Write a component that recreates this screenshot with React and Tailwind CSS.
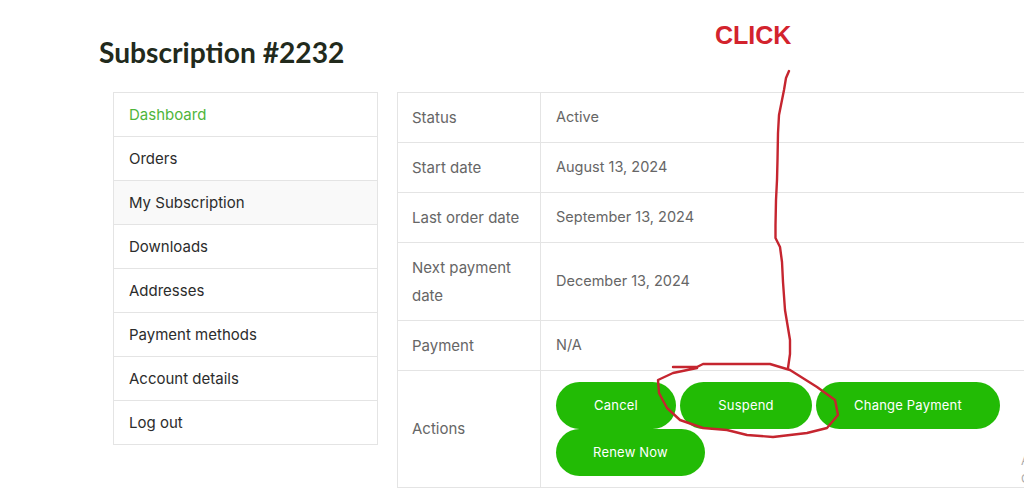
import React from 'react';

const menuItems = ['Dashboard', 'Orders', 'My Subscription', 'Downloads', 'Addresses', 'Payment methods', 'Account details', 'Log out'];

const rows = [
  { label: 'Status', value: 'Active', rowClass: 'h-[50px]' },
  { label: 'Start date', value: 'August 13, 2024', rowClass: 'h-[50px]' },
  { label: 'Last order date', value: 'September 13, 2024', rowClass: 'h-[50px]' },
  { label: 'Next payment date', value: 'December 13, 2024', rowClass: 'h-[78px]' },
  { label: 'Payment', value: 'N/A', rowClass: 'h-[50px]' },
];

const ActionButton = ({ label, width }) => (
  <button className={`${width} h-[47px] rounded-full bg-[#22bb05] text-white text-[13px] tracking-[0.2px]`}>{label}</button>
);

const App = () => {
  return (
    <div className="relative w-[1024px] h-[498px] overflow-hidden bg-white font-['Inter',sans-serif]">
      <h1 className="pl-[99px] pt-[34px] h-[92px] text-[28.2px] leading-[36px] font-bold text-[#222a1c] font-['Lato',sans-serif]">Subscription #2232</h1>

      <div className="flex items-start pl-[113px] gap-[19px]">
        <nav className="w-[265px] shrink-0 border border-[#e4e4e4] border-b-0">
          {menuItems.map((item, i) => (
            <div
              key={item}
              className={`h-[44px] flex items-center pl-[15px] pt-[1px] border-b border-[#e4e4e4] text-[15px] ${i === 0 ? 'text-[#4fb53c]' : 'text-[#2c2c2c]'} ${i === 2 ? 'bg-[#f9f9f9]' : ''}`}
            >
              {item}
            </div>
          ))}
        </nav>

        <div className="w-[700px] shrink-0 border border-[#e4e4e4] border-b-0 text-[15px] text-[#666666]">
          {rows.map((row) => (
            <div key={row.label} className={`${row.rowClass} flex border-b border-[#e4e4e4]`}>
              <div className="w-[143px] shrink-0 flex items-center pl-[14px] pr-[15px] leading-[28px] border-r border-[#e4e4e4]">{row.label}</div>
              <div className="flex items-center pl-[15px] pb-[1px] text-[14.5px]">{row.value}</div>
            </div>
          ))}
          <div className="h-[117px] flex border-b border-[#e4e4e4]">
            <div className="w-[143px] shrink-0 flex items-center pl-[14px] pr-[15px] border-r border-[#e4e4e4]">Actions</div>
            <div className="pl-[15px] pt-[11px] flex flex-wrap content-start gap-x-[4px] w-[470px]">
              <ActionButton label="Cancel" width="w-[120px]" />
              <ActionButton label="Suspend" width="w-[132px]" />
              <ActionButton label="Change Payment" width="w-[184px]" />
              <ActionButton label="Renew Now" width="w-[149px]" />
            </div>
          </div>
        </div>
      </div>

      {/* clipped text at the right edge */}
      <div className="absolute left-[1021px] top-[452px] text-[12px] leading-[18px] text-[#aaaaaa]">A<br />G</div>

      {/* hand drawn annotation on top of the page */}
      <div className="absolute left-[715px] top-[19px] text-[25px] leading-[32px] font-bold text-[#d3232d] font-['Liberation_Sans',sans-serif]">CLICK</div>
      <svg className="absolute left-0 top-0" width="1024" height="498" fill="none" stroke="#c5252f" strokeWidth="2.4" strokeLinejoin="round" strokeLinecap="round">
        <path d="M789 71 L786 78 L784 90 L782 100 L779 115 L778 133 L777.5 160 L777 180 L776 200 L775.5 225 L775.5 238 L780 247 L782 262 L783 282 L785 310 L787 322 L790 340 L790 354 L788 368" />
        <path d="M673 367 L697 367 L703 364 L770 364 L790 370 L817 387 L835 400 L838 415 L827 428 L807 433 L773 437 L747 435 L727 430 L703 428 L680 420 L667 408 L659 393 L658 380 L673 373 L697 368" />
      </svg>
    </div>
  );
};

export default App;
